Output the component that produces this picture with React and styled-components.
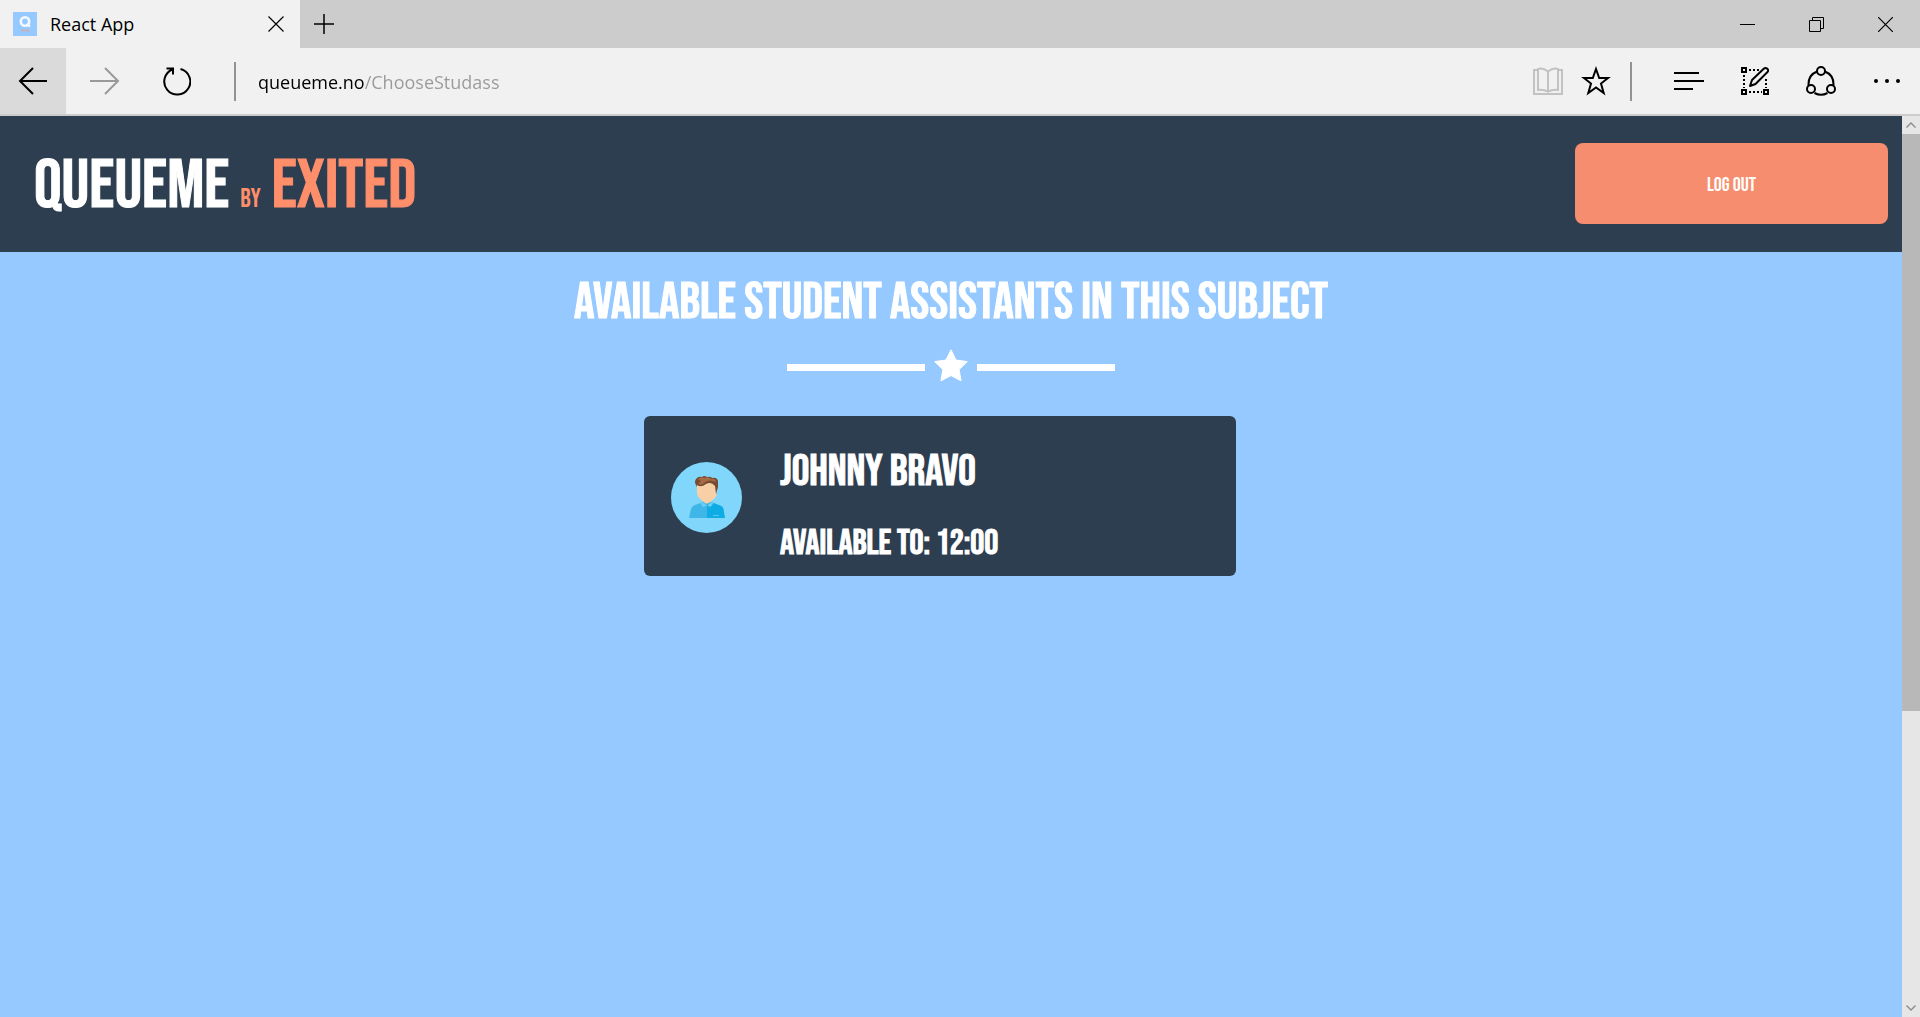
import React from "react";
import styled, { createGlobalStyle } from "styled-components";

const navy = "#2d3e50";
const sky = "#95c9ff";
const coral = "#ff8e6b";

const Global = createGlobalStyle`
  *, *::before, *::after { box-sizing: border-box; }
  body { margin: 0; font-family: "Open Sans", "Noto Sans", sans-serif; }
  button { border: 0; padding: 0; background: none; font: inherit; color: inherit; cursor: pointer; }
  svg { display: block; }
`;

const Window = styled.div`
  display: flex;
  flex-direction: column;
  height: 100vh;
  overflow: hidden;
`;

const TabBar = styled.div`
  display: flex;
  flex: none;
  height: 48px;
  background: #ccc;
`;

const Tab = styled.div`
  display: flex;
  align-items: center;
  gap: 13px;
  width: 300px;
  padding: 0 12px 0 13px;
  background: #f1f1f1;
  color: #000;
  font-size: 18px;
  line-height: 24px;
`;

const TabTitle = styled.span`
  flex: 1;
`;

const TabButton = styled.button`
  display: grid;
  place-items: center;
  width: ${(p) => p.$width}px;
  height: 48px;
`;

const CloseTab = styled(TabButton)`
  height: 24px;
`;

const WindowControls = styled.div`
  display: flex;
  margin-left: auto;
`;

const Toolbar = styled.div`
  display: flex;
  flex: none;
  align-items: center;
  height: 68px;
  border-bottom: 2px solid #ccc;
  background: #f1f1f1;
`;

const ToolButton = styled.button`
  display: grid;
  place-items: center;
  align-self: stretch;
  width: ${(p) => p.$width || 66}px;
  background: ${(p) => (p.$active ? "#dadada" : "transparent")};
  color: ${(p) => p.$color || "#000"};
`;

const Separator = styled.div`
  width: 2px;
  height: 39px;
  margin: 0 ${(p) => p.$after}px 0 ${(p) => p.$before}px;
  background: #929292;
`;

const Address = styled.input`
  flex: 1;
  min-width: 0;
  height: 40px;
  padding: 2px 0 0;
  border: 0;
  outline: 0;
  background: linear-gradient(to right, #000 106px, #999 106px);
  -webkit-background-clip: text;
  background-clip: text;
  color: transparent;
  caret-color: #000;
  font: 18px/24px "Open Sans", "Noto Sans", sans-serif;
`;

const Viewport = styled.div`
  display: flex;
  flex: 1;
  min-height: 0;
`;

const Page = styled.div`
  flex: 1;
  min-width: 0;
  background: ${sky};
  color: #fff;
  font-family: "Bebas Neue", Oswald, "Roboto Condensed", sans-serif;
`;

const Header = styled.header`
  display: flex;
  align-items: center;
  justify-content: space-between;
  padding: 27px 14px 28px 34px;
  background: ${navy};
`;

const Logo = styled.div`
  display: flex;
  align-items: baseline;
  gap: 11px;
  padding-top: 6px;
  font-size: 69px;
  line-height: 72px;
  -webkit-text-stroke: 1px currentColor;
`;

const By = styled.span`
  color: ${coral};
  font-size: 26px;
  line-height: 32px;
  -webkit-text-stroke: 0;
`;

const Company = styled.span`
  color: ${coral};
`;

const LogOut = styled.button`
  width: 313px;
  height: 81px;
  padding-top: 2px;
  border-radius: 8px;
  background: #f68d6e;
  color: #fff;
  font-size: 20px;
  line-height: 24px;
`;

const Main = styled.main`
  display: flex;
  flex-direction: column;
  align-items: center;
  padding-top: 19px;
`;

const Title = styled.h1`
  margin: 0;
  font-size: 51px;
  font-weight: 400;
  line-height: 64px;
  -webkit-text-stroke: 1px currentColor;
`;

const Divider = styled.div`
  display: flex;
  align-items: center;
  gap: 9px;
  margin: 14px 0 31px;
`;

const Bar = styled.span`
  width: 138px;
  height: 7px;
  background: #fff;
`;

const Card = styled.article`
  display: flex;
  align-items: center;
  gap: 38px;
  width: 592px;
  max-width: 100%;
  margin-right: 22px;
  padding: 0 27px;
  border-radius: 6px;
  background: ${navy};
`;

const Portrait = styled.div`
  padding-top: 3px;
`;

const Details = styled.div`
  padding: 30px 0 10px;
  -webkit-text-stroke: 1px currentColor;
`;

const Name = styled.h2`
  margin: 0 0 24px;
  font-size: 44px;
  font-weight: 400;
  line-height: 52px;
`;

const Availability = styled.p`
  margin: 0;
  font-size: 35px;
  line-height: 44px;
`;

const ScrollTrack = styled.div`
  display: flex;
  flex-direction: column;
  width: 18px;
  background: #e6e6e6;
  color: #8a8a8a;
`;

const ScrollButton = styled.button`
  display: grid;
  place-items: center;
  flex: none;
  height: 18px;
`;

const ScrollThumb = styled.div`
  flex: 2;
  background: #b8b8b8;
`;

const ScrollRest = styled.div`
  flex: 1;
`;

function Icon({ w, h, sw = 2, children }) {
  return (
    <svg width={w} height={h} viewBox={`0 0 ${w} ${h}`} fill="none" stroke="currentColor" strokeWidth={sw} aria-hidden="true">
      {children}
    </svg>
  );
}

const Favicon = () => (
  <svg width="24" height="24" viewBox="0 0 24 24" aria-hidden="true">
    <path fill={sky} d="M0 0h24v24H0z" />
    <circle cx="12" cy="9.5" r="4.2" fill="none" stroke="#f4f9ff" strokeWidth="2.6" />
    <path d="M13.500 12l3.500 2.500" stroke="#f4f9ff" strokeWidth="2.4" />
    <path d="M8.500 18.500h8" stroke="#c9aebb" strokeWidth="2" />
  </svg>
);

const Star = () => (
  <svg width="34" height="36" viewBox="0 0 34 36" aria-hidden="true">
    <path
      fill="#fff"
      stroke="#fff"
      strokeLinejoin="round"
      d="M17 .8l5 10.200 11.300 1.600-8.200 8 2 11.300L17 26.600l-10.100 5.300 2-11.300-8.200-8L12 11z"
    />
  </svg>
);

const Avatar = () => (
  <svg width="71" height="71" viewBox="0 0 71 71" role="img" aria-label="Student assistant">
    <circle cx="35.5" cy="35.5" r="35.5" fill="#80d6fb" />
    <path fill="#3fb6e8" d="M18 56l2-9q1-3 4-4l8-3h4v16z" />
    <path fill="#0eace4" d="M36 40h4l8 3q4 1 4.500 4L54 56H36z" />
    <path fill="#f9d0a6" d="M26 20h19v12l1 1-2 3-6 5q-2 1-4 0l-6-5-2-4z" />
    <path fill="#6ccdf4" d="M30 39l6 4.500-4 1.500-3-4zM41.500 39L36 43.500l3.500 1.500 3-4z" />
    <path stroke="#5cc8ef" d="M42 53.500h6" />
    <path fill="#784c33" d="M26 25q-4-6 0-9 2-2 5-1 2-2 5 0 4-1 5 1 5-1 6 3v6l-2 7-1-8q-4-5-9-2-5 4-9 1z" />
    <path fill="#a76b43" d="M27 17q4-3 6-1 5-2 7 1 4-1 5 3-8-4-13 2-3 2-5-1 2 0 3-2-2-1-3-2z" />
  </svg>
);

export default function App() {
  return (
    <Window>
      <Global />
      <TabBar>
        <Tab>
          <Favicon />
          <TabTitle>React App</TabTitle>
          <CloseTab $width={24} aria-label="Close tab">
            <Icon w={16} h={16} sw={1.2}>
              <path d="M.5.5l15 15M15.500.5l-15 15" />
            </Icon>
          </CloseTab>
        </Tab>
        <TabButton $width={48} aria-label="New tab">
          <Icon w={20} h={20} sw={1.5}>
            <path d="M10 0v20M0 10h20" />
          </Icon>
        </TabButton>
        <WindowControls>
          <TabButton $width={69} aria-label="Minimize">
            <Icon w={15} h={15} sw={1}>
              <path d="M0 7.500h15" />
            </Icon>
          </TabButton>
          <TabButton $width={69} aria-label="Restore">
            <Icon w={15} h={15} sw={1}>
              <path d="M.5 3.500h11v11H.5zM3.500 3.500v-3h11v11h-3" />
            </Icon>
          </TabButton>
          <TabButton $width={69} aria-label="Close window">
            <Icon w={15} h={15} sw={1.2}>
              <path d="M0 0l15 15M15 0L0 15" />
            </Icon>
          </TabButton>
        </WindowControls>
      </TabBar>

      <Toolbar>
        <ToolButton $active aria-label="Back">
          <Icon w={30} h={28}>
            <path d="M29 14H1.500M15 1L2 14l13 13" />
          </Icon>
        </ToolButton>
        <ToolButton $width={78} $color="#999" aria-label="Forward">
          <Icon w={30} h={28}>
            <path d="M0 14h28.500M15 1l13 13-13 13" />
          </Icon>
        </ToolButton>
        <ToolButton aria-label="Refresh">
          <Icon w={28} h={30}>
            <path d="M17.500 3A13 13 0 1 1 9.500 3.500M3.500 2.500h6.500v6" />
          </Icon>
        </ToolButton>
        <Separator $before={24} $after={22} />
        <Address aria-label="Address" defaultValue="queueme.no/ChooseStudass" spellCheck="false" />
        <ToolButton $width={48} $color="#c2c2c2" aria-label="Reading view">
          <Icon w={30} h={28}>
            <path d="M5 3H1v24h28V3h-4M15 4.500Q10 .5 5 2v21q5-1 10 1.500Q20 22 25 23V2q-5-1.500-10 2.500v20" />
          </Icon>
        </ToolButton>
        <ToolButton $width={48} aria-label="Add to favorites">
          <Icon w={30} h={30}>
            <path d="M15 3l3.200 9H27l-7 5.500 2.700 9.500L15 21.500 7.300 27 10 17.500 3 12h8.800z" />
          </Icon>
        </ToolButton>
        <Separator $before={10} $after={24} />
        <ToolButton aria-label="Hub">
          <Icon w={30} h={18}>
            <path d="M0 1h25M0 9h30M0 17h19" />
          </Icon>
        </ToolButton>
        <ToolButton aria-label="Make a web note">
          <Icon w={28} h={28}>
            <path d="M1 1h4v4H1zM1 23h4v4H1zM23 23h4v4h-4z" />
            <path strokeDasharray="2 2" d="M8 3h10M3 8v13M8 25h13M25 12v9" />
            <path strokeLinejoin="round" d="M9 19l2-6L23 1.500q2-1 3.500.5t0 3L14.500 17z" />
          </Icon>
        </ToolButton>
        <ToolButton aria-label="Share">
          <Icon w={30} h={30}>
            <circle cx="15" cy="5" r="4" />
            <circle cx="5" cy="23" r="4" />
            <circle cx="25" cy="23" r="4" />
            <path d="M11 5.500Q2 9 2.500 19.500M19 5.500q9 3.500 8.500 14M8.500 27q6.500 3.500 13 0" />
          </Icon>
        </ToolButton>
        <ToolButton aria-label="More">
          <svg width="28" height="4" viewBox="0 0 28 4" fill="currentColor" aria-hidden="true">
            <circle cx="3" cy="2" r="2" />
            <circle cx="14" cy="2" r="2" />
            <circle cx="25" cy="2" r="2" />
          </svg>
        </ToolButton>
      </Toolbar>

      <Viewport>
        <Page>
          <Header>
            <Logo>
              <span>QUEUEME</span>
              <By>BY</By>
              <Company>EXITED</Company>
            </Logo>
            <LogOut>LOG OUT</LogOut>
          </Header>
          <Main>
            <Title>AVAILABLE STUDENT ASSISTANTS IN THIS SUBJECT</Title>
            <Divider>
              <Bar />
              <Star />
              <Bar />
            </Divider>
            <Card>
              <Portrait>
                <Avatar />
              </Portrait>
              <Details>
                <Name>JOHNNY BRAVO</Name>
                <Availability>AVAILABLE TO: 12:00</Availability>
              </Details>
            </Card>
          </Main>
        </Page>
        <ScrollTrack>
          <ScrollButton aria-label="Scroll up">
            <Icon w={10} h={6} sw={1.3}>
              <path d="M.5 5.500L5 1l4.500 4.500" />
            </Icon>
          </ScrollButton>
          <ScrollThumb />
          <ScrollRest />
          <ScrollButton aria-label="Scroll down">
            <Icon w={10} h={6} sw={1.3}>
              <path d="M.5.5L5 5 9.500.5" />
            </Icon>
          </ScrollButton>
        </ScrollTrack>
      </Viewport>
    </Window>
  );
}
